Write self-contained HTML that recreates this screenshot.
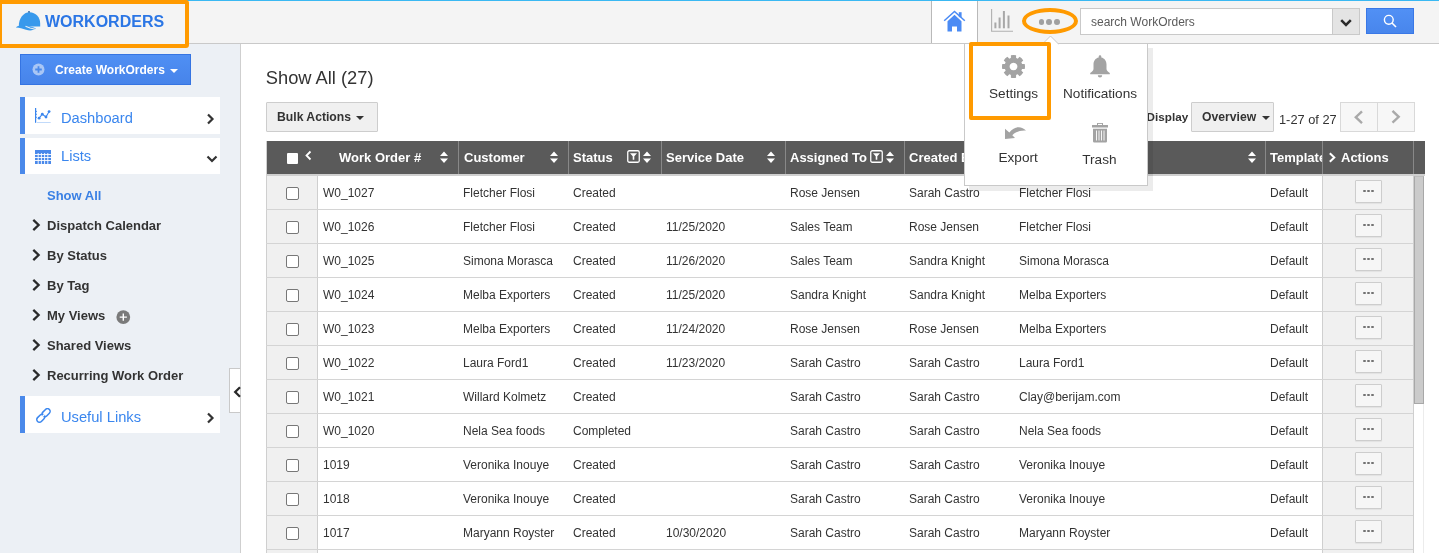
<!DOCTYPE html>
<html><head><meta charset="utf-8">
<style>
*{margin:0;padding:0;box-sizing:border-box}
body{will-change:transform;}
html,body{width:1439px;height:553px;overflow:hidden;background:#fff;font-family:"Liberation Sans",sans-serif;color:#333}
.ab{position:absolute}
#hdr{position:absolute;left:0;top:0;width:1439px;height:44px;background:#f4f4f4;border-bottom:1px solid #c9c9c9}
#topline{position:absolute;left:0;top:0;width:1439px;height:1px;background:#3ab8f2}
#logo{position:absolute;z-index:5;left:-2px;top:0;width:191px;height:48px;border:4px solid #ff9a00;border-radius:0 3px 3px 0;background:#f4f4f4}
#logotxt{position:absolute;z-index:6;left:45px;top:13px;font-size:16px;font-weight:bold;color:#2b76e5;letter-spacing:0px}
#side{position:absolute;left:0;top:44px;width:241px;height:509px;background:#ecf0f5;border-right:1px solid #cfcfcf}
#create{position:absolute;left:20px;top:54px;width:171px;height:31px;background:linear-gradient(#4f8ff4,#4784ea);border:1px solid #3574e2;color:#fff;font-size:12px;font-weight:bold}
.panel{position:absolute;left:20px;width:200px;height:37px;background:#fff;border-left:5px solid #4a89ea}
.ptxt{position:absolute;left:36px;top:13px;font-size:14.7px;color:#3a86ee}
.sub{position:absolute;left:47px;font-size:13px;font-weight:bold;color:#333}
.chev{position:absolute}
.cell{font-size:12px;color:#333;white-space:nowrap;line-height:14px}
.rowline{left:266px;width:1147px;height:1px;background:#d4d4d4}
.cb{width:13px;height:13px;border:1px solid #777;border-radius:2px;background:#fff}
.dotbtn{width:27px;height:23px;border:1px solid #cdcdcd;background:#f6f6f6;border-radius:1px;box-shadow:0 1px 1px rgba(0,0,0,.06)}
.dotbtn span{position:absolute;top:8.5px;width:2.6px;height:2.6px;border-radius:50%;background:#737373}
.dotbtn span:nth-child(1){left:7.3px}
.dotbtn span:nth-child(2){left:11.3px}
.dotbtn span:nth-child(3){left:15.3px}
.hd{position:absolute;top:150px;font-size:13px;font-weight:bold;color:#fff;white-space:nowrap;line-height:15px}
.vsep{position:absolute;top:141px;width:1px;height:33px;background:#888}
.btn{position:absolute;background:#f0f0f0;border:1px solid #cdcdcd;border-radius:1px;font-size:12.2px;font-weight:bold;color:#333}
.caret{position:absolute;width:0;height:0;border-left:4px solid transparent;border-right:4px solid transparent;border-top:4px solid #333}
.pop{position:absolute;font-size:13.6px;color:#333;white-space:nowrap}
</style></head><body>
<div id="hdr"></div>
<div id="topline"></div>
<div id="logo"></div>
<!-- helmet icon -->
<svg class="ab" style="left:15px;top:10px;z-index:6" width="27" height="22" viewBox="0 0 27 22">
 <path d="M3.8 16.5 C3.6 8.5 8.5 2.3 14.5 2.3 C20.8 2.3 25.2 7.5 25.2 13.5 L25.2 16.5 Z" fill="#3899ec"/>
 <path d="M1 17.2 C3.5 15.6 7 15 10.5 15.6 C14.5 16.3 18 17.2 21 18.6 C18.5 20.6 14.5 20.8 11 19.8 C7.5 18.8 4.5 17.6 1 17.6 Z" fill="#3899ec"/>
 <circle cx="14" cy="1.8" r="0.9" fill="#1f5ea0"/>
 <path d="M10.5 16.2 L15 18 L20.5 19.2" stroke="#e8eef5" stroke-width="1.1" fill="none"/>
</svg>
<div id="logotxt">WORKORDERS</div>

<!-- header right -->
<div class="ab" style="left:931px;top:1px;width:47px;height:42px;background:#fff;border-left:1px solid #b9b9b9;border-right:1px solid #b9b9b9"></div>
<svg class="ab" style="left:943px;top:10px" width="23" height="23" viewBox="0 0 23 23">
 <path d="M1.2 10.8 L11.5 1.4 L21.8 10.8" fill="none" stroke="#4b8bf4" stroke-width="1.5"/>
 <rect x="15.8" y="2.2" width="2.8" height="5" fill="#4b8bf4"/>
 <path d="M4.5 11.2 L11.5 4.8 L18.5 11.2 V21.6 H14 V16.5 H9 V21.6 H4.5 Z" fill="#4b8bf4"/>
</svg>
<svg class="ab" style="left:990px;top:9px" width="24" height="23" viewBox="0 0 24 23">
 <path d="M1.6 0 V22.2 H23" fill="none" stroke="#b0b0b0" stroke-width="1.1"/>
 <rect x="4.4" y="13.5" width="2" height="5.8" fill="#a8a8a8"/>
 <rect x="8.6" y="8.5" width="2" height="10.8" fill="#a8a8a8"/>
 <rect x="12.9" y="2" width="2" height="17.3" fill="#a8a8a8"/>
 <rect x="17.5" y="6.5" width="2" height="12.8" fill="#a8a8a8"/>
</svg>
<div class="ab" style="left:1038.5px;top:19.2px;width:5.8px;height:5.8px;border-radius:50%;background:#a0a0a0"></div>
<div class="ab" style="left:1046.3px;top:19.2px;width:5.8px;height:5.8px;border-radius:50%;background:#a0a0a0"></div>
<div class="ab" style="left:1054px;top:19.2px;width:5.8px;height:5.8px;border-radius:50%;background:#a0a0a0"></div>
<div class="ab" style="left:1022px;top:8px;width:56px;height:26px;border:4px solid #ff9a00;border-radius:50%"></div>
<!-- search -->
<div class="ab" style="left:1080px;top:8px;width:280px;height:27px;background:#fff;border:1px solid #c9c9c9"></div>
<div class="ab" style="left:1091px;top:15px;font-size:12px;color:#5a5a5a">search WorkOrders</div>
<div class="ab" style="left:1332px;top:8px;width:28px;height:27px;background:#e4e4e4;border:1px solid #c9c9c9"></div>
<svg class="ab" style="left:1339.5px;top:18.5px" width="12" height="9" viewBox="0 0 12 9"><path d="M1.2 1.2 L6 6 L10.8 1.2" fill="none" stroke="#2a2a2a" stroke-width="2.5"/></svg>
<div class="ab" style="left:1366px;top:8px;width:48px;height:26px;background:linear-gradient(#5190f5,#4886ec);border:1px solid #3a78e6"></div>
<svg class="ab" style="left:1383px;top:14px" width="14" height="14" viewBox="0 0 14 14"><circle cx="5.8" cy="5.8" r="4.4" fill="none" stroke="#fff" stroke-width="1.4"/><path d="M9 9 L13 13" stroke="#fff" stroke-width="1.6"/></svg>

<!-- sidebar -->
<div id="side"></div>
<div id="create">
 <svg class="ab" style="left:11.3px;top:8px" width="13" height="13" viewBox="0 0 13 13"><circle cx="6.5" cy="6.5" r="6" fill="#a9c6f5"/><path d="M6.5 3.2 V9.8 M3.2 6.5 H9.8" stroke="#4a89ea" stroke-width="1.8"/></svg>
 <div class="ab" style="left:34px;top:8px">Create WorkOrders</div>
 <div class="caret" style="left:149px;top:14px;border-top-color:#fff"></div>
</div>
<div class="panel" style="top:97px">
 <svg class="ab" style="left:10px;top:11px" width="17" height="16" viewBox="0 0 17 16"><rect x="0" y="0" width="1.2" height="14.8" fill="#3a86ee"/><path d="M1 3.4 h1 M1 6.3 h1 M1 9.3 h1" stroke="#3a86ee" stroke-width="0.9"/><rect x="2" y="14" width="13.7" height="0.9" fill="#3a86ee" opacity=".35"/><path d="M4.1 10.2 L7.3 6.2 L11 9 L14.1 3.6" fill="none" stroke="#3a86ee" stroke-width="1.1"/><circle cx="4.1" cy="10.2" r="1.4" fill="#3a86ee"/><circle cx="7.3" cy="6.2" r="1.4" fill="#3a86ee"/><circle cx="11" cy="9" r="1.4" fill="#3a86ee"/><circle cx="14.1" cy="3.6" r="1.4" fill="#3a86ee"/></svg>
 <div class="ptxt">Dashboard</div>
 <svg class="ab" style="left:181px;top:16px" width="9" height="12" viewBox="0 0 9 12"><path d="M2 1.5 L6.5 6 L2 10.5" fill="none" stroke="#333" stroke-width="2.2"/></svg>
</div>
<div class="panel" style="top:138px;height:36px">
 <svg class="ab" style="left:10px;top:12px" width="16" height="14" viewBox="0 0 16 14"><rect x="0" y="0" width="16" height="14" fill="#4a89ea"/><g stroke="#fff" stroke-width="0.9"><path d="M0 4.5 H16 M0 7.5 H16 M0 10.5 H16 M3.2 3 V14 M6.4 3 V14 M9.6 3 V14 M12.8 3 V14"/></g></svg>
 <div class="ptxt" style="top:10px">Lists</div>
 <svg class="ab" style="left:181px;top:17px" width="12" height="9" viewBox="0 0 12 9"><path d="M1.5 1.5 L6 6 L10.5 1.5" fill="none" stroke="#333" stroke-width="2.2"/></svg>
</div>
<div class="sub" style="top:188px;color:#3a80e4">Show All</div>
<svg class="ab" style="left:32px;top:219px" width="9" height="12" viewBox="0 0 9 12"><path d="M1.3 0.9 L6.6 6 L1.3 11.1" fill="none" stroke="#2a2a2a" stroke-width="2.3"/></svg>
<div class="sub" style="top:218px">Dispatch Calendar</div>
<svg class="ab" style="left:32px;top:249px" width="9" height="12" viewBox="0 0 9 12"><path d="M1.3 0.9 L6.6 6 L1.3 11.1" fill="none" stroke="#2a2a2a" stroke-width="2.3"/></svg>
<div class="sub" style="top:248px">By Status</div>
<svg class="ab" style="left:32px;top:279px" width="9" height="12" viewBox="0 0 9 12"><path d="M1.3 0.9 L6.6 6 L1.3 11.1" fill="none" stroke="#2a2a2a" stroke-width="2.3"/></svg>
<div class="sub" style="top:278px">By Tag</div>
<svg class="ab" style="left:32px;top:309px" width="9" height="12" viewBox="0 0 9 12"><path d="M1.3 0.9 L6.6 6 L1.3 11.1" fill="none" stroke="#2a2a2a" stroke-width="2.3"/></svg>
<div class="sub" style="top:308px">My Views</div>
<svg class="ab" style="left:32px;top:339px" width="9" height="12" viewBox="0 0 9 12"><path d="M1.3 0.9 L6.6 6 L1.3 11.1" fill="none" stroke="#2a2a2a" stroke-width="2.3"/></svg>
<div class="sub" style="top:338px">Shared Views</div>
<svg class="ab" style="left:32px;top:369px" width="9" height="12" viewBox="0 0 9 12"><path d="M1.3 0.9 L6.6 6 L1.3 11.1" fill="none" stroke="#2a2a2a" stroke-width="2.3"/></svg>
<div class="sub" style="top:368px">Recurring Work Order</div>
<svg class="ab" style="left:116px;top:309.5px" width="15" height="15" viewBox="0 0 15 15"><circle cx="7.3" cy="7.1" r="6.9" fill="#7a7a7a"/><path d="M7.3 3.5 V10.7 M3.7 7.1 H10.9" stroke="#fff" stroke-width="1.4"/></svg>
<div class="panel" style="top:396px">
 <svg class="ab" style="left:11px;top:12px" width="16" height="15" viewBox="0 0 16 15"><g fill="none" stroke="#3a86ee" stroke-width="1.5"><rect x="-4.6" y="-2.7" width="9.2" height="5.4" rx="2.7" transform="translate(10.1 4.7) rotate(-45)"/><rect x="-4.6" y="-2.7" width="9.2" height="5.4" rx="2.7" transform="translate(4.8 10.2) rotate(-45)"/></g><path d="M6.2 8.8 L8.7 6.3" stroke="#fff" stroke-width="1.4"/><path d="M5.6 9.4 L9.3 5.7" stroke="#3a86ee" stroke-width="1.4" opacity="0"/></svg>
 <div class="ptxt">Useful Links</div>
 <svg class="ab" style="left:181px;top:16px" width="9" height="12" viewBox="0 0 9 12"><path d="M2 1.5 L6.5 6 L2 10.5" fill="none" stroke="#333" stroke-width="2.2"/></svg>
</div>
<div class="ab" style="left:229px;top:368px;width:11px;height:45px;background:#fff;border:1px solid #c9c9c9;border-right:none"></div>
<svg class="ab" style="left:232.5px;top:386px" width="9" height="12" viewBox="0 0 9 12"><path d="M7 1.2 L2.2 6 L7 10.8" fill="none" stroke="#2a2a2a" stroke-width="2.3"/></svg>

<!-- content -->
<div class="ab" style="left:265.8px;top:67px;font-size:18.3px;color:#333">Show All (27)</div>
<div class="btn" style="left:266px;top:102px;width:112px;height:30px"><div class="ab" style="left:10px;top:7px">Bulk Actions</div><div class="caret" style="left:89px;top:13px"></div></div>
<div class="ab" style="left:1146.6px;top:109.5px;font-size:11.7px;font-weight:bold;color:#333">Display</div>
<div class="btn" style="left:1191px;top:102px;width:83px;height:30px"><div class="ab" style="left:10px;top:7px">Overview</div><div class="caret" style="left:70px;top:13px"></div></div>
<div class="ab" style="left:1279px;top:112px;font-size:12.8px;color:#333">1-27 of 27</div>
<div class="ab" style="left:1340px;top:102px;width:75px;height:30px;background:#f7f7f7;border:1px solid #d9d9d9"></div>
<div class="ab" style="left:1377px;top:102px;width:1px;height:30px;background:#d9d9d9"></div>
<svg class="ab" style="left:1354px;top:110px" width="10" height="15" viewBox="0 0 10 15"><path d="M8 1.3 L1.8 7.2 L8 13.1" fill="none" stroke="#a9a9a9" stroke-width="2.4"/></svg>
<svg class="ab" style="left:1391px;top:110px" width="10" height="15" viewBox="0 0 10 15"><path d="M1.5 0.9 L7.7 6.8 L1.5 12.7" fill="none" stroke="#a9a9a9" stroke-width="2.4"/></svg>

<!-- table -->
<div class="ab" style="left:266px;top:141px;width:1159px;height:35px;background:#5a5a5a;border-bottom:2px solid #cfcfcf;border-left:1px solid #cfcfcf"></div>
<div class="ab" style="left:266px;top:176px;width:52px;height:378px;background:#f0f0f0;border-left:1px solid #cfcfcf;border-right:1px solid #cfcfcf"></div>
<div class="ab" style="left:1322px;top:176px;width:92px;height:378px;background:#f0f0f0;border-left:1px solid #cfcfcf;border-right:1px solid #cfcfcf"></div>
<div class="ab" style="left:1423px;top:176px;width:1px;height:378px;background:#ececec"></div>
<div class="ab" style="left:1414px;top:176px;width:10px;height:228px;background:#cbcbcb;border:1px solid #a8a8a8;border-top-color:#bdbdbd"></div>
<div class="vsep" style="left:458px"></div>
<div class="vsep" style="left:568px"></div>
<div class="vsep" style="left:661px"></div>
<div class="vsep" style="left:785px"></div>
<div class="vsep" style="left:904px"></div>
<div class="vsep" style="left:1014px"></div>
<div class="vsep" style="left:1265px"></div>
<div class="vsep" style="left:1322px"></div>
<div class="vsep" style="left:1413px"></div>
<div class="ab" style="left:287px;top:153px;width:11px;height:11px;background:#fff;border-radius:1px"></div>
<svg class="ab" style="left:304px;top:150px" width="9" height="12" viewBox="0 0 9 12"><path d="M6.5 1.5 L2.5 5.5 L6.5 9.5" fill="none" stroke="#fff" stroke-width="1.8"/></svg>
<div class="hd" style="left:339px">Work Order #</div>
<svg class="ab" style="left:439px;top:150px" width="10" height="16" viewBox="0 0 10 16"><path d="M1 6 L5 1.5 L9 6 Z M1 8.5 L5 13 L9 8.5 Z" fill="#fff"/></svg>
<div class="hd" style="left:464px">Customer</div>
<svg class="ab" style="left:549px;top:150px" width="10" height="16" viewBox="0 0 10 16"><path d="M1 6 L5 1.5 L9 6 Z M1 8.5 L5 13 L9 8.5 Z" fill="#fff"/></svg>
<div class="hd" style="left:573px">Status</div>
<svg class="ab" style="left:642px;top:150px" width="10" height="16" viewBox="0 0 10 16"><path d="M1 6 L5 1.5 L9 6 Z M1 8.5 L5 13 L9 8.5 Z" fill="#fff"/></svg>
<div class="hd" style="left:666px">Service Date</div>
<svg class="ab" style="left:766px;top:150px" width="10" height="16" viewBox="0 0 10 16"><path d="M1 6 L5 1.5 L9 6 Z M1 8.5 L5 13 L9 8.5 Z" fill="#fff"/></svg>
<div class="hd" style="left:790px">Assigned To</div>
<svg class="ab" style="left:885px;top:150px" width="10" height="16" viewBox="0 0 10 16"><path d="M1 6 L5 1.5 L9 6 Z M1 8.5 L5 13 L9 8.5 Z" fill="#fff"/></svg>
<div class="hd" style="left:909px">Created By</div>
<svg class="ab" style="left:1247px;top:150px" width="10" height="16" viewBox="0 0 10 16"><path d="M1 6 L5 1.5 L9 6 Z M1 8.5 L5 13 L9 8.5 Z" fill="#fff"/></svg>
<svg class="ab" style="left:627px;top:150px" width="13" height="13" viewBox="0 0 13 13"><rect x="0.75" y="0.75" width="11.5" height="11.5" rx="1.5" fill="none" stroke="#fff" stroke-width="1.3"/><path d="M3 3.2 H10 L7.3 6.2 V9.8 H5.7 V6.2 Z" fill="#fff"/></svg>
<svg class="ab" style="left:870px;top:150px" width="13" height="13" viewBox="0 0 13 13"><rect x="0.75" y="0.75" width="11.5" height="11.5" rx="1.5" fill="none" stroke="#fff" stroke-width="1.3"/><path d="M3 3.2 H10 L7.3 6.2 V9.8 H5.7 V6.2 Z" fill="#fff"/></svg>
<svg class="ab" style="left:1328px;top:152px" width="9" height="12" viewBox="0 0 9 12"><path d="M1.8 1.2 L6.3 5.5 L1.8 9.8" fill="none" stroke="#fff" stroke-width="2"/></svg>
<div class="ab" style="left:1266px;top:141px;width:56px;height:33px;overflow:hidden"><div class="hd" style="left:4px;top:9px">Template</div></div>
<div class="hd" style="left:1341px">Actions</div>
<div class="ab rowline" style="top:209px"></div>
<div class="ab cb" style="left:286px;top:187px"></div>
<div class="ab cell" style="left:323px;top:186px">W0_1027</div>
<div class="ab cell" style="left:463px;top:186px">Fletcher Flosi</div>
<div class="ab cell" style="left:573px;top:186px">Created</div>
<div class="ab cell" style="left:790px;top:186px">Rose Jensen</div>
<div class="ab cell" style="left:909px;top:186px">Sarah Castro</div>
<div class="ab cell" style="left:1019px;top:186px">Fletcher Flosi</div>
<div class="ab cell" style="left:1270px;top:186px">Default</div>
<div class="ab dotbtn" style="left:1355px;top:180px"><span></span><span></span><span></span></div>
<div class="ab rowline" style="top:243px"></div>
<div class="ab cb" style="left:286px;top:221px"></div>
<div class="ab cell" style="left:323px;top:220px">W0_1026</div>
<div class="ab cell" style="left:463px;top:220px">Fletcher Flosi</div>
<div class="ab cell" style="left:573px;top:220px">Created</div>
<div class="ab cell" style="left:666px;top:220px">11/25/2020</div>
<div class="ab cell" style="left:790px;top:220px">Sales Team</div>
<div class="ab cell" style="left:909px;top:220px">Rose Jensen</div>
<div class="ab cell" style="left:1019px;top:220px">Fletcher Flosi</div>
<div class="ab cell" style="left:1270px;top:220px">Default</div>
<div class="ab dotbtn" style="left:1355px;top:214px"><span></span><span></span><span></span></div>
<div class="ab rowline" style="top:277px"></div>
<div class="ab cb" style="left:286px;top:255px"></div>
<div class="ab cell" style="left:323px;top:254px">W0_1025</div>
<div class="ab cell" style="left:463px;top:254px">Simona Morasca</div>
<div class="ab cell" style="left:573px;top:254px">Created</div>
<div class="ab cell" style="left:666px;top:254px">11/26/2020</div>
<div class="ab cell" style="left:790px;top:254px">Sales Team</div>
<div class="ab cell" style="left:909px;top:254px">Sandra Knight</div>
<div class="ab cell" style="left:1019px;top:254px">Simona Morasca</div>
<div class="ab cell" style="left:1270px;top:254px">Default</div>
<div class="ab dotbtn" style="left:1355px;top:248px"><span></span><span></span><span></span></div>
<div class="ab rowline" style="top:311px"></div>
<div class="ab cb" style="left:286px;top:289px"></div>
<div class="ab cell" style="left:323px;top:288px">W0_1024</div>
<div class="ab cell" style="left:463px;top:288px">Melba Exporters</div>
<div class="ab cell" style="left:573px;top:288px">Created</div>
<div class="ab cell" style="left:666px;top:288px">11/25/2020</div>
<div class="ab cell" style="left:790px;top:288px">Sandra Knight</div>
<div class="ab cell" style="left:909px;top:288px">Sandra Knight</div>
<div class="ab cell" style="left:1019px;top:288px">Melba Exporters</div>
<div class="ab cell" style="left:1270px;top:288px">Default</div>
<div class="ab dotbtn" style="left:1355px;top:282px"><span></span><span></span><span></span></div>
<div class="ab rowline" style="top:345px"></div>
<div class="ab cb" style="left:286px;top:323px"></div>
<div class="ab cell" style="left:323px;top:322px">W0_1023</div>
<div class="ab cell" style="left:463px;top:322px">Melba Exporters</div>
<div class="ab cell" style="left:573px;top:322px">Created</div>
<div class="ab cell" style="left:666px;top:322px">11/24/2020</div>
<div class="ab cell" style="left:790px;top:322px">Rose Jensen</div>
<div class="ab cell" style="left:909px;top:322px">Rose Jensen</div>
<div class="ab cell" style="left:1019px;top:322px">Melba Exporters</div>
<div class="ab cell" style="left:1270px;top:322px">Default</div>
<div class="ab dotbtn" style="left:1355px;top:316px"><span></span><span></span><span></span></div>
<div class="ab rowline" style="top:379px"></div>
<div class="ab cb" style="left:286px;top:357px"></div>
<div class="ab cell" style="left:323px;top:356px">W0_1022</div>
<div class="ab cell" style="left:463px;top:356px">Laura Ford1</div>
<div class="ab cell" style="left:573px;top:356px">Created</div>
<div class="ab cell" style="left:666px;top:356px">11/23/2020</div>
<div class="ab cell" style="left:790px;top:356px">Sarah Castro</div>
<div class="ab cell" style="left:909px;top:356px">Sarah Castro</div>
<div class="ab cell" style="left:1019px;top:356px">Laura Ford1</div>
<div class="ab cell" style="left:1270px;top:356px">Default</div>
<div class="ab dotbtn" style="left:1355px;top:350px"><span></span><span></span><span></span></div>
<div class="ab rowline" style="top:413px"></div>
<div class="ab cb" style="left:286px;top:391px"></div>
<div class="ab cell" style="left:323px;top:390px">W0_1021</div>
<div class="ab cell" style="left:463px;top:390px">Willard Kolmetz</div>
<div class="ab cell" style="left:573px;top:390px">Created</div>
<div class="ab cell" style="left:790px;top:390px">Sarah Castro</div>
<div class="ab cell" style="left:909px;top:390px">Sarah Castro</div>
<div class="ab cell" style="left:1019px;top:390px">Clay@berijam.com</div>
<div class="ab cell" style="left:1270px;top:390px">Default</div>
<div class="ab dotbtn" style="left:1355px;top:384px"><span></span><span></span><span></span></div>
<div class="ab rowline" style="top:447px"></div>
<div class="ab cb" style="left:286px;top:425px"></div>
<div class="ab cell" style="left:323px;top:424px">W0_1020</div>
<div class="ab cell" style="left:463px;top:424px">Nela Sea foods</div>
<div class="ab cell" style="left:573px;top:424px">Completed</div>
<div class="ab cell" style="left:790px;top:424px">Sarah Castro</div>
<div class="ab cell" style="left:909px;top:424px">Sarah Castro</div>
<div class="ab cell" style="left:1019px;top:424px">Nela Sea foods</div>
<div class="ab cell" style="left:1270px;top:424px">Default</div>
<div class="ab dotbtn" style="left:1355px;top:418px"><span></span><span></span><span></span></div>
<div class="ab rowline" style="top:481px"></div>
<div class="ab cb" style="left:286px;top:459px"></div>
<div class="ab cell" style="left:323px;top:458px">1019</div>
<div class="ab cell" style="left:463px;top:458px">Veronika Inouye</div>
<div class="ab cell" style="left:573px;top:458px">Created</div>
<div class="ab cell" style="left:790px;top:458px">Sarah Castro</div>
<div class="ab cell" style="left:909px;top:458px">Sarah Castro</div>
<div class="ab cell" style="left:1019px;top:458px">Veronika Inouye</div>
<div class="ab cell" style="left:1270px;top:458px">Default</div>
<div class="ab dotbtn" style="left:1355px;top:452px"><span></span><span></span><span></span></div>
<div class="ab rowline" style="top:515px"></div>
<div class="ab cb" style="left:286px;top:493px"></div>
<div class="ab cell" style="left:323px;top:492px">1018</div>
<div class="ab cell" style="left:463px;top:492px">Veronika Inouye</div>
<div class="ab cell" style="left:573px;top:492px">Created</div>
<div class="ab cell" style="left:790px;top:492px">Sarah Castro</div>
<div class="ab cell" style="left:909px;top:492px">Sarah Castro</div>
<div class="ab cell" style="left:1019px;top:492px">Veronika Inouye</div>
<div class="ab cell" style="left:1270px;top:492px">Default</div>
<div class="ab dotbtn" style="left:1355px;top:486px"><span></span><span></span><span></span></div>
<div class="ab rowline" style="top:549px"></div>
<div class="ab cb" style="left:286px;top:527px"></div>
<div class="ab cell" style="left:323px;top:526px">1017</div>
<div class="ab cell" style="left:463px;top:526px">Maryann Royster</div>
<div class="ab cell" style="left:573px;top:526px">Created</div>
<div class="ab cell" style="left:666px;top:526px">10/30/2020</div>
<div class="ab cell" style="left:790px;top:526px">Sarah Castro</div>
<div class="ab cell" style="left:909px;top:526px">Sarah Castro</div>
<div class="ab cell" style="left:1019px;top:526px">Maryann Royster</div>
<div class="ab cell" style="left:1270px;top:526px">Default</div>
<div class="ab dotbtn" style="left:1355px;top:520px"><span></span><span></span><span></span></div>
<div class="ab rowline" style="top:583px"></div>
<div class="ab cb" style="left:286px;top:561px"></div>
<div class="ab cell" style="left:323px;top:560px">1016</div>
<div class="ab cell" style="left:1270px;top:560px">Default</div>
<div class="ab dotbtn" style="left:1355px;top:554px"><span></span><span></span><span></span></div>
<!-- popup -->
<div class="ab" style="left:969px;top:48px;width:184px;height:143px;background:rgba(0,0,0,.075)"></div>
<div class="ab" style="left:964px;top:43px;width:184px;height:143px;background:#fff;border:1px solid #c9c9c9"></div>
<svg class="ab" style="left:1042px;top:35px" width="17" height="10" viewBox="0 0 17 10"><path d="M0 9.5 L8.5 1 L17 9.5" fill="#fff" stroke="#c9c9c9" stroke-width="1"/><rect x="1" y="9" width="15" height="2" fill="#fff"/></svg>
<div class="ab" style="left:969px;top:42px;width:82px;height:78px;border:4px solid #ff9a00;border-radius:2px"></div>
<svg class="ab" style="left:1001.5px;top:54.5px" width="23" height="23" viewBox="0 0 24 24"><path fill="#a3a3a3" fill-rule="evenodd" d="M9.28 3.11 L9.30 0.31 A12 12 0 0 1 14.70 0.31 L14.72 3.11 A9.3 9.3 0 0 1 16.37 3.79 L18.36 1.82 A12 12 0 0 1 22.18 5.64 L20.21 7.63 A9.3 9.3 0 0 1 20.89 9.28 L23.69 9.30 A12 12 0 0 1 23.69 14.70 L20.89 14.72 A9.3 9.3 0 0 1 20.21 16.37 L22.18 18.36 A12 12 0 0 1 18.36 22.18 L16.37 20.21 A9.3 9.3 0 0 1 14.72 20.89 L14.70 23.69 A12 12 0 0 1 9.30 23.69 L9.28 20.89 A9.3 9.3 0 0 1 7.63 20.21 L5.64 22.18 A12 12 0 0 1 1.82 18.36 L3.79 16.37 A9.3 9.3 0 0 1 3.11 14.72 L0.31 14.70 A12 12 0 0 1 0.31 9.30 L3.11 9.28 A9.3 9.3 0 0 1 3.79 7.63 L1.82 5.64 A12 12 0 0 1 5.64 1.82 L7.63 3.79 A9.3 9.3 0 0 1 9.28 3.11 Z M12 8 A4 4 0 1 0 12.001 8 Z"/></svg>
<div class="pop" style="left:989px;top:86px">Settings</div>
<svg class="ab" style="left:1090px;top:55px" width="20" height="23" viewBox="0 0 20 23"><path fill="#a3a3a3" d="M10 0.3 a1.3 1.3 0 0 1 1.3 1.3 v0.9 c3.3 0.7 5.2 3.5 5.2 7 v4.6 c0 1.6 1.3 2.7 3.3 4 v1.2 H0.2 v-1.2 c2 -1.3 3.3 -2.4 3.3 -4 V9.5 c0 -3.5 1.9 -6.3 5.2 -7 V1.6 A1.3 1.3 0 0 1 10 0.3 Z M7.8 20.2 h4.4 a2.2 2.2 0 0 1 -4.4 0 Z"/></svg>
<div class="pop" style="left:1063px;top:86px">Notifications</div>
<svg class="ab" style="left:1003px;top:124px" width="24" height="17" viewBox="0 0 24 17"><path fill="#a3a3a3" d="M2 4.8 L2 15 L12 14 L9.3 11.3 C12.5 8.2 16.5 6.2 23 6.6 C19 2.2 12 1.2 6.3 8.6 Z"/></svg>
<div class="pop" style="left:998.5px;top:150px">Export</div>
<svg class="ab" style="left:1092px;top:123px" width="16" height="20" viewBox="0 0 16 20"><path fill="#a3a3a3" d="M5 0 h6 v2 h4.8 a0.2 0.2 0 0 1 0.2 0.2 v2.4 h-16 v-2.4 a0.2 0.2 0 0 1 0.2 -0.2 h4.8 Z"/><path fill="#fff" d="M6 0.9 h4 v1.1 h-4 Z"/><path fill="#a3a3a3" d="M1 5.8 h14 v12.5 a1.2 1.2 0 0 1 -1.2 1.2 h-11.6 a1.2 1.2 0 0 1 -1.2 -1.2 Z"/><path stroke="#fff" stroke-width="0.9" d="M4.5 7.5 V17.5 M7 7.5 V17.5 M9.5 7.5 V17.5 M12 7.5 V17.5"/></svg>
<div class="pop" style="left:1082.3px;top:151.5px">Trash</div>
</body></html>
